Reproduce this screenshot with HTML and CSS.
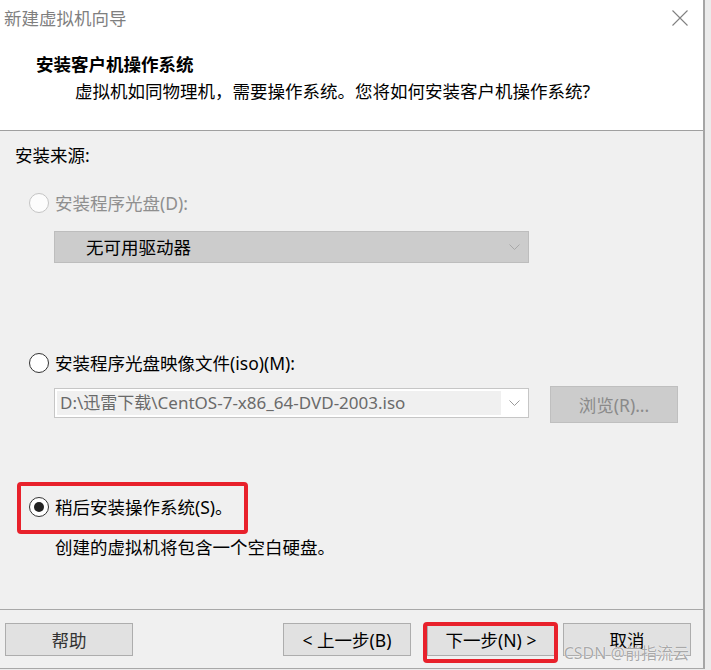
FILE: index.html
```html
<!DOCTYPE html>
<html lang="zh-CN">
<head>
<meta charset="utf-8">
<title>新建虚拟机向导</title>
<link rel="stylesheet" href="styles.css">
</head>
<body>
<div class="window">
  <header class="header">
    <div class="titlebar">
      <span class="title">新建虚拟机向导</span>
      <svg class="close" width="16" height="16" viewBox="0 0 16 16"><path d="M0.5 0.5L15.5 15.5M15.5 0.5L0.5 15.5" stroke="#808080" stroke-width="1.1" fill="none"/></svg>
    </div>
    <h1 class="heading">安装客户机操作系统</h1>
    <p class="subtitle">虚拟机如同物理机，需要操作系统。您将如何安装客户机操作系统?</p>
  </header>
  <main class="content">
    <div class="section-label">安装来源:</div>
    <div class="opt opt-disc disabled"><span class="radio"></span><span>安装程序光盘(D):</span></div>
    <div class="combo combo-disabled"><span class="combo-text">无可用驱动器</span><svg class="chev" width="11" height="6" viewBox="0 0 11 6"><path d="M0.5 0.5L5.5 5.5L10.5 0.5" stroke="#a8a8a8" fill="none"/></svg></div>
    <div class="opt opt-iso"><span class="radio"></span><span>安装程序光盘映像文件(iso)(M):</span></div>
    <div class="iso-row">
      <div class="combo combo-input"><span class="field">D:\迅雷下载\CentOS-7-x86_64-DVD-2003.iso</span><svg class="chev" width="11" height="6" viewBox="0 0 11 6"><path d="M0.5 0.5L5.5 5.5L10.5 0.5" stroke="#9a9a9a" fill="none"/></svg></div>
      <div class="btn btn-disabled">浏览(R)...</div>
    </div>
    <div class="opt opt-later marked"><span class="radio checked"></span><span>稍后安装操作系统(S)。</span></div>
    <p class="note">创建的虚拟机将包含一个空白硬盘。</p>
  </main>
  <footer class="footer">
    <div class="btn btn-help">帮助</div>
    <div class="nav">
      <div class="btn">&lt; 上一步(B)</div>
      <div class="btn btn-next">下一步(N) &gt;</div>
      <div class="btn btn-cancel">取消</div>
    </div>
    <span class="watermark">CSDN @前指流云</span>
  </footer>
</div>
</body>
</html>
```

FILE: styles.css
```css
*, *::before, *::after { box-sizing: border-box; }
html, body { margin: 0; padding: 0; }
body {
  background: #ebebeb;
  width: 711px;
  height: 670px;
  overflow: hidden;
  font-family: "Noto Sans", "Noto Sans CJK SC", sans-serif;
  font-size: 17px;
  color: #000;
}
.window {
  width: 705px;
  background: #f0f0f0;
  border-right: 2px solid #a5a5a5;
}
.header {
  background: #fff;
  height: 131px;
  border-bottom: 1px solid #a0a0a0;
}
.titlebar {
  height: 36px;
  display: flex;
  align-items: center;
  justify-content: space-between;
  padding: 0 15px 0 4px;
}
.title {
  font-size: 17.5px;
  color: #7f7f7f;
  line-height: 24px;
}
.heading {
  margin: 16px 0 0 36px;
  font-size: 17.5px;
  font-weight: bold;
  line-height: 24px;
}
.subtitle {
  margin: 3px 0 0 75px;
  font-size: 17.5px;
  line-height: 24px;
}
.content {
  display: block;
  height: 479px;
  padding-top: 12px;
  border-bottom: 1px solid #a8a8a8;
}
.section-label {
  margin-left: 15px;
  line-height: 24px;
  font-size: 17.5px;
}
.opt {
  display: flex;
  align-items: center;
  gap: 6px;
  padding-left: 29px;
  line-height: 24px;
  height: 24px;
  font-size: 17.5px;
}
.opt.disabled { color: #8f8f8f; }
.opt-disc { margin-top: 24px; }
.opt-iso { margin-top: 88px; }
.opt-later { margin-top: 72px; }
.radio {
  width: 20px;
  height: 20px;
  border-radius: 50%;
  border: 1.5px solid #333;
  background: #fff;
  display: flex;
  align-items: center;
  justify-content: center;
  flex: none;
}
.opt.disabled .radio {
  border-color: #c4c4c4;
  background: #fcfcfc;
}
.radio.checked::before {
  content: "";
  width: 10px;
  height: 10px;
  border-radius: 50%;
  background: #222;
}
.marked { position: relative; }
.marked::after {
  content: "";
  position: absolute;
  left: 17px;
  top: -13px;
  width: 231px;
  height: 52px;
  border: 4px solid #e8212b;
  border-radius: 4px;
}
.combo {
  display: flex;
  align-items: center;
  justify-content: space-between;
  width: 475px;
  margin-left: 54px;
  padding-right: 8px;
}
.combo-disabled {
  margin-top: 16px;
  height: 32px;
  background: #cccccc;
  border: 1px solid #bdbdbd;
  padding-left: 31px;
}
.combo-text { line-height: 24px; font-size: 17.5px; }
.chev { flex: none; }
.iso-row {
  display: flex;
  align-items: flex-start;
  gap: 21px;
  margin-top: 11px;
}
.combo-input {
  margin-top: 2px;
  height: 30px;
  background: #fff;
  border: 1px solid #c6c6c6;
  padding: 2px 8px 2px 2px;
  align-items: stretch;
}
.combo-input .chev { align-self: center; }
.field {
  width: 444px;
  background: #f0f0f0;
  color: #6a6a6a;
  padding-left: 3px;
  line-height: 24px;
  font-size: 17px;
  white-space: nowrap;
  overflow: hidden;
}
.btn {
  width: 128px;
  height: 33px;
  display: flex;
  align-items: center;
  justify-content: center;
  background: #e1e1e1;
  border: 1px solid #adadad;
  font-size: 17.5px;
  line-height: 24px;
}
.btn-disabled {
  height: 37px;
  background: #cccccc;
  border-color: #bfbfbf;
  color: #8a8a8a;
}
.note {
  margin: 16px 0 0 55px;
  line-height: 24px;
  font-size: 17.5px;
}
.footer {
  position: relative;
  height: 59px;
  display: flex;
  align-items: flex-start;
  justify-content: space-between;
  padding: 13px 12px 0 5px;
  border-bottom: 1px solid #a8a8a8;
}
.btn-help { color: #333; }
.nav {
  display: flex;
  gap: 16px;
}
.btn-next { position: relative; }
.btn-next::after {
  content: "";
  position: absolute;
  left: -5px;
  right: -4px;
  top: -2px;
  bottom: -8px;
  border: 4px solid #e8212b;
  border-radius: 4px;
}
.btn-cancel { margin-left: -8px; }
.watermark {
  position: absolute;
  right: 14px;
  bottom: 5px;
  font-size: 16px;
  line-height: 20px;
  color: #a9a9a9;
  text-shadow: 0 0 1px #fff, 0 0 1px #fff;
}
```
